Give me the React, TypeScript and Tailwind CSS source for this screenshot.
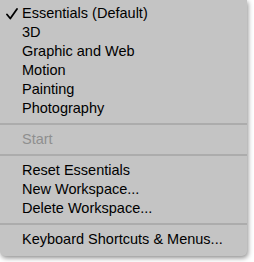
import React from 'react';

type Entry = { label: string; checked?: boolean; disabled?: boolean } | 'sep';

const entries: Entry[] = [
  { label: 'Essentials (Default)', checked: true },
  { label: '3D' },
  { label: 'Graphic and Web' },
  { label: 'Motion' },
  { label: 'Painting' },
  { label: 'Photography' },
  'sep',
  { label: 'Start', disabled: true },
  'sep',
  { label: 'Reset Essentials' },
  { label: 'New Workspace...' },
  { label: 'Delete Workspace...' },
  'sep',
  { label: 'Keyboard Shortcuts & Menus...' },
];

export default function App() {
  return (
    <div className="w-[254px] h-[262px] bg-white overflow-hidden">
      <div
        className="w-[247px] bg-[#c4c4c4] rounded-b-[5px] pt-[4px] pb-[7px] shadow-[1px_2px_5px_rgba(0,0,0,0.45)] text-[14.5px] leading-[19px] text-black"
        style={{ fontFamily: '"Liberation Sans", Arial, sans-serif' }}
      >
        {entries.map((e, i) =>
          e === 'sep' ? (
            <div key={i} className="py-[5px]">
              <div className="h-[2px] bg-[#acacac]" />
            </div>
          ) : (
            <div key={i} className="relative h-[19px] pl-[22px] flex items-center">
              {e.checked && (
                <svg className="absolute left-[6px] top-[4px]" width="12" height="12" viewBox="0 0 12 12">
                  <path d="M1 6.5 L4.3 10.5 L11 1" fill="none" stroke="#000" strokeWidth="1.8" strokeLinecap="round" strokeLinejoin="round" />
                </svg>
              )}
              <span className={e.disabled ? 'text-[#8f8f8f]' : ''}>{e.label}</span>
            </div>
          )
        )}
      </div>
    </div>
  );
}
